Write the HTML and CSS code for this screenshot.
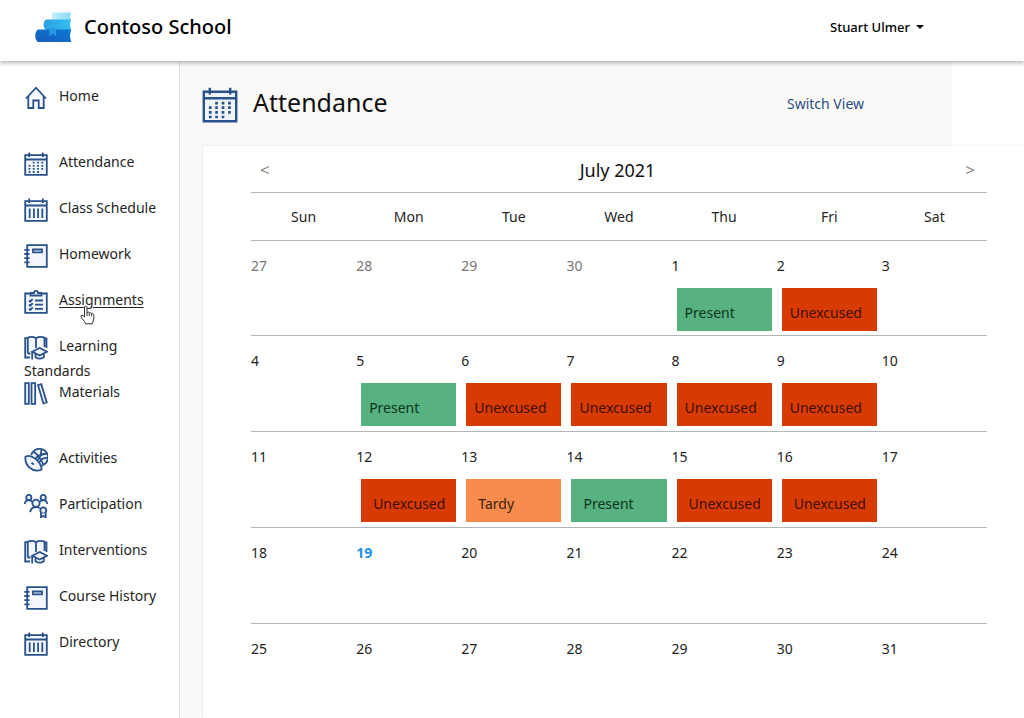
FILE: index.html
```html
<!DOCTYPE html>
<html lang="en">
<head>
<meta charset="utf-8">
<title>Contoso School - Attendance</title>
<link rel="stylesheet" href="styles.css">
</head>
<body>
<svg class="sprite" aria-hidden="true">
  <defs>
    <linearGradient id="g-top"><stop offset="0" stop-color="#c3f1fd"/><stop offset="1" stop-color="#85d9f6"/></linearGradient>
    <linearGradient id="g-mid"><stop offset="0" stop-color="#2b9fe2"/><stop offset="1" stop-color="#35bdf1"/></linearGradient>
    <linearGradient id="g-low" x1="0" y1="1" x2="1" y2="0"><stop offset="0" stop-color="#1a5cbe"/><stop offset="1" stop-color="#0a78d4"/></linearGradient>
  </defs>
  <symbol id="home" viewBox="0 0 24 24"><path d="M2 12.500 12 1.700l10 10.800M4.300 10.500V22H9.300V14.500H14.700V22H19.700V10.500"/></symbol>
  <symbol id="calendar" viewBox="0 0 24 24"><path d="M1.200 3.200H22.800V22.800H1.200ZM1.200 7.500H22.800M5.200.5V5M18.800.5V5"/><path class="dots" d="M9.700 9.800V21M14 9.800V21M18.300 9.800V18M5.500 12.900V21"/></symbol>
  <symbol id="schedule" viewBox="0 0 24 24"><path d="M1.200 3.200H22.800V22.800H1.200ZM1.200 7.500H22.800M5.200.5V5M18.800.5V5M5.700 10.500V20M9.900 10.500V20M14.100 10.500V20M18.300 10.500V20"/></symbol>
  <symbol id="notebook" viewBox="0 0 24 24"><path d="M3.200 1.200H22.800V22.800H3.200ZM9 5.500H18V8.300H9ZM.3 5.800H5.500M.3 10H5.500M.3 14.200H5.500M.3 18.400H5.500"/></symbol>
  <symbol id="clipboard" viewBox="0 0 24 24"><path d="M6.500 3.500H1.200V22.800H22.800V3.500H17.500M6.500 5.500V3H10Q10 .9 12 .9T14 3H17.500V5.500ZM11 10.500H19M11 14.700H19M11 18.900H19M5 10.300l1.300 1.300 2.400-2.600M5 14.500l1.300 1.300 2.400-2.600M5 18.700l1.300 1.300 2.400-2.600"/></symbol>
  <symbol id="book-cap" viewBox="0 0 24 24"><path d="M3.800 2.200H1.200V21.500H6M3.800 17.500V1.700Q8.500-.1 12 2.200 15.700-.1 20.500 1.700V11M3.800 17.500H6.500M12 2.200V12M20.500 2.500H22.500V12"/><path d="M8.200 15.700 15.700 12l7.200 3.700-7.200 3.800ZM11.500 17.800V21.300Q15.700 24 19.800 21.300V17.800M8.200 15.700V23.500"/></symbol>
  <symbol id="books" viewBox="0 0 24 24"><path d="M1.200 1.200H4.800V21.800H1.200ZM7.500 1.200H11.200V21.800H7.500ZM14 3.200 17.300 2.200 22.700 20.500 19.400 21.500Z"/></symbol>
  <symbol id="balls" viewBox="0 0 24 24"><path d="M7.200 7A8.600 8.600 0 1 1 17.200 17.800M9 3.300Q15.500 7.500 19.300 16.500M22.800 5.500Q15 6.500 11.500 10.500M17.300 1Q17.500 9 13.500 12M23.300 10Q18.500 9.500 15.500 14"/><path d="M1.500 8.700Q5.800 6.500 11.500 10.900 17.500 15.800 17.600 21.500 11.500 24.600 5 19.200.6 14.500 1.500 8.700ZM7.500 14.700 9.800 16.600"/></symbol>
  <symbol id="people" viewBox="0 0 24 24"><circle cx="4.800" cy="3.500" r="2.600"/><circle cx="19.200" cy="3.500" r="2.600"/><circle cx="12" cy="9.200" r="3.600"/><path d="M.8 10Q1.200 6.300 4.800 6.200 7.500 6.300 8.300 8.200M23.200 10Q22.800 6.300 19.200 6.200 16.500 6.300 15.700 8.200M6.200 18.200Q6.800 13.200 12 12.900 14 12.900 15.500 14.200"/><circle cx="19.300" cy="16.300" r="3"/><path d="M17 18.500V23.300L19.300 22 21.700 23.300V18.500"/></symbol>
</svg>

<header class="topbar">
  <div class="brand">
    <svg class="logo" viewBox="0 0 37 32" aria-hidden="true">
      <path fill="url(#g-top)" d="M17 1.500H36L35 5.500l1 4H17Z"/>
      <path fill="url(#g-mid)" d="M11 8.500H36l-1 5 1 5.500H11Q8.500 17.500 8.500 13.700T11 8.500Z"/>
      <path fill="url(#g-low)" d="M3 18.500H36l-1 6 1 6.500H3Q.3 29 .3 24.700T3 18.500Z"/>
      <path fill="#259bdf" d="M14.500 17H21V25.500L17.700 22.500 14.500 25.500Z"/>
    </svg>
    <span class="brand-name">Contoso School</span>
  </div>
  <button class="account" type="button">Stuart Ulmer<span class="caret"></span></button>
</header>

<div class="shell">
  <nav class="sidebar" aria-label="Main">
    <ul class="nav-group">
      <li><a href="#"><svg class="icon"><use href="#home"/></svg>Home</a></li>
    </ul>
    <ul class="nav-group">
      <li><a href="#"><svg class="icon"><use href="#calendar"/></svg>Attendance</a></li>
      <li><a href="#"><svg class="icon"><use href="#schedule"/></svg>Class Schedule</a></li>
      <li><a href="#"><svg class="icon"><use href="#notebook"/></svg>Homework</a></li>
      <li class="hovered"><a href="#"><svg class="icon"><use href="#clipboard"/></svg><span class="underlined">Assignments</span></a>
        <svg class="pointer" viewBox="0 0 15 20" aria-hidden="true"><path d="M4.500 12V2.500Q4.500 1 5.700 1T7 2.500V8Q7.300 6.700 8.300 6.900T9.300 8.500Q9.700 7.300 10.700 7.600T11.600 9.200Q12.100 8.300 13 8.700T13.800 10.500V14L12.300 18.800H5.500L4.500 16.500 1 12Q.6 10.400 2 10.200 3 10.300 4.500 12M7 8V11M9.300 8.500V11M11.600 9.200V11.300"/></svg></li>
      <li><a href="#"><svg class="icon"><use href="#book-cap"/></svg>Learning Standards</a></li>
      <li><a href="#"><svg class="icon"><use href="#books"/></svg>Materials</a></li>
    </ul>
    <ul class="nav-group">
      <li><a href="#"><svg class="icon"><use href="#balls"/></svg>Activities</a></li>
      <li><a href="#"><svg class="icon"><use href="#people"/></svg>Participation</a></li>
      <li><a href="#"><svg class="icon"><use href="#book-cap"/></svg>Interventions</a></li>
      <li><a href="#"><svg class="icon"><use href="#notebook"/></svg>Course History</a></li>
      <li><a href="#"><svg class="icon"><use href="#schedule"/></svg>Directory</a></li>
    </ul>
  </nav>

  <main class="content">
    <div class="page-head">
      <svg class="page-icon"><use href="#calendar"/></svg>
      <h1>Attendance</h1>
      <a class="switch" href="#">Switch View</a>
    </div>
    <section class="card">
      <div class="month-bar">
        <button type="button" aria-label="Previous month">&lt;</button>
        <h2>July 2021</h2>
        <button type="button" aria-label="Next month">&gt;</button>
      </div>
      <table class="calendar">
        <thead>
          <tr><th>Sun</th><th>Mon</th><th>Tue</th><th>Wed</th><th>Thu</th><th>Fri</th><th>Sat</th></tr>
        </thead>
        <tbody>
          <tr>
            <td class="other">27</td><td class="other">28</td><td class="other">29</td><td class="other">30</td>
            <td>1<div class="mark present">Present</div></td>
            <td>2<div class="mark unexcused">Unexcused</div></td>
            <td>3</td>
          </tr>
          <tr>
            <td>4</td>
            <td>5<div class="mark present">Present</div></td>
            <td>6<div class="mark unexcused">Unexcused</div></td>
            <td>7<div class="mark unexcused">Unexcused</div></td>
            <td>8<div class="mark unexcused">Unexcused</div></td>
            <td>9<div class="mark unexcused">Unexcused</div></td>
            <td>10</td>
          </tr>
          <tr class="indented">
            <td>11</td>
            <td>12<div class="mark unexcused">Unexcused</div></td>
            <td>13<div class="mark tardy">Tardy</div></td>
            <td>14<div class="mark present">Present</div></td>
            <td>15<div class="mark unexcused">Unexcused</div></td>
            <td>16<div class="mark unexcused">Unexcused</div></td>
            <td>17</td>
          </tr>
          <tr><td>18</td><td class="today">19</td><td>20</td><td>21</td><td>22</td><td>23</td><td>24</td></tr>
          <tr><td>25</td><td>26</td><td>27</td><td>28</td><td>29</td><td>30</td><td>31</td></tr>
        </tbody>
      </table>
    </section>
  </main>
</div>
</body>
</html>
```
FILE: styles.css
```css
* { box-sizing: border-box; }

body {
  margin: 0;
  min-height: 100vh;
  display: flex;
  flex-direction: column;
  background: #fff;
  color: #252423;
  font: 14px/24px "Noto Sans", "Open Sans", sans-serif;
}

button {
  padding: 0;
  border: 0;
  background: none;
  color: inherit;
  font: inherit;
}

a { color: inherit; text-decoration: none; }

h1, h2 { margin: 0; font-weight: 400; color: #111; }

.sprite { position: absolute; width: 0; height: 0; }

.topbar {
  position: relative;
  display: flex;
  align-items: center;
  justify-content: space-between;
  height: 61px;
  padding: 0 100px 8px 35px;
  background: #fff;
  box-shadow: 0 2px 4px rgba(0, 0, 0, 0.3);
}

.brand { display: flex; align-items: center; gap: 12px; }
.logo { width: 37px; height: 32px; }
.brand-name { color: #000; font-size: 20px; font-weight: 500; }

.account {
  display: flex;
  align-items: center;
  gap: 6px;
  color: #000;
  font-size: 13px;
  font-weight: 500;
}

.caret {
  border: 4px solid transparent;
  border-top-color: #000;
  border-bottom: 0;
}

.shell { display: flex; flex: 1; }

.sidebar {
  flex: none;
  width: 180px;
  padding: 23px 16px 0 24px;
  border-right: 1px solid #e3e2e0;
}

.nav-group { margin: 0 0 20px; padding: 0; list-style: none; }
.nav-group li { position: relative; height: 46px; }
.nav-group a { display: block; }

.icon {
  width: 24px;
  height: 24px;
  margin: 1px 11px -1px 0;
  vertical-align: middle;
}

.icon, .page-icon {
  fill: #eaf1fb;
  fill-opacity: 0.6;
  stroke: #29518c;
  stroke-width: 1.8;
}

.page-icon { stroke-width: 1.6; }

.dots { stroke-width: 1.8; stroke-dasharray: 1.8 1.3; }

.underlined { text-decoration: underline; text-underline-offset: 2px; }

.pointer {
  position: absolute;
  left: 56px;
  top: 17px;
  width: 15px;
  height: 20px;
  fill: #fff;
  stroke: #333;
}

.content {
  flex: 1;
  min-width: 0;
  display: flex;
  flex-direction: column;
  padding-left: 22px;
  background: #faf9f8;
}

.page-head {
  display: flex;
  align-items: center;
  height: 85px;
  border-right: 72px solid #fff;
}

.page-icon { width: 36px; height: 36px; margin: 2px 15px 0 0; }
h1 { padding-bottom: 4px; font-size: 25px; line-height: 32px; }
.switch { margin: 0 88px 0 auto; color: #2b4f82; }

.card {
  flex: 1;
  margin-left: 1px;
  padding: 0 37px 0 48px;
  background: #fff;
  box-shadow: 0 0 2px rgba(0, 0, 0, 0.12);
}

.month-bar {
  display: flex;
  align-items: center;
  justify-content: space-between;
  height: 46px;
  padding: 2px 12px 0 9px;
}

.month-bar button { color: #8a8886; font-size: 17px; }
h2 { font-size: 18px; }

.calendar {
  width: 100%;
  table-layout: fixed;
  border-collapse: collapse;
}

.calendar th {
  height: 48px;
  padding: 1px 0 0;
  border-top: 1px solid #b5b5b5;
  font-weight: 400;
}

.calendar td {
  height: 96px;
  padding: 13px 0 0;
  border-top: 1px solid #b5b5b5;
  vertical-align: top;
}

.calendar tr:nth-child(odd) td { height: 95px; }
.calendar tbody tr:nth-child(3) td { height: 96px; }
.calendar tr:last-child td { height: 90px; }

.calendar .other { color: #797775; }
.calendar .today { color: #2090e8; font-weight: 700; }

.mark {
  height: 43px;
  margin: 10px 5px 0;
  padding: 13px 8px 0;
  color: #0c3520;
}

.indented .mark { padding-left: 12px; }
.present { background: #57b181; }
.unexcused { background: #d83b01; color: #400f00; }
.tardy { background: #f88b4e; color: #40200c; }
```
